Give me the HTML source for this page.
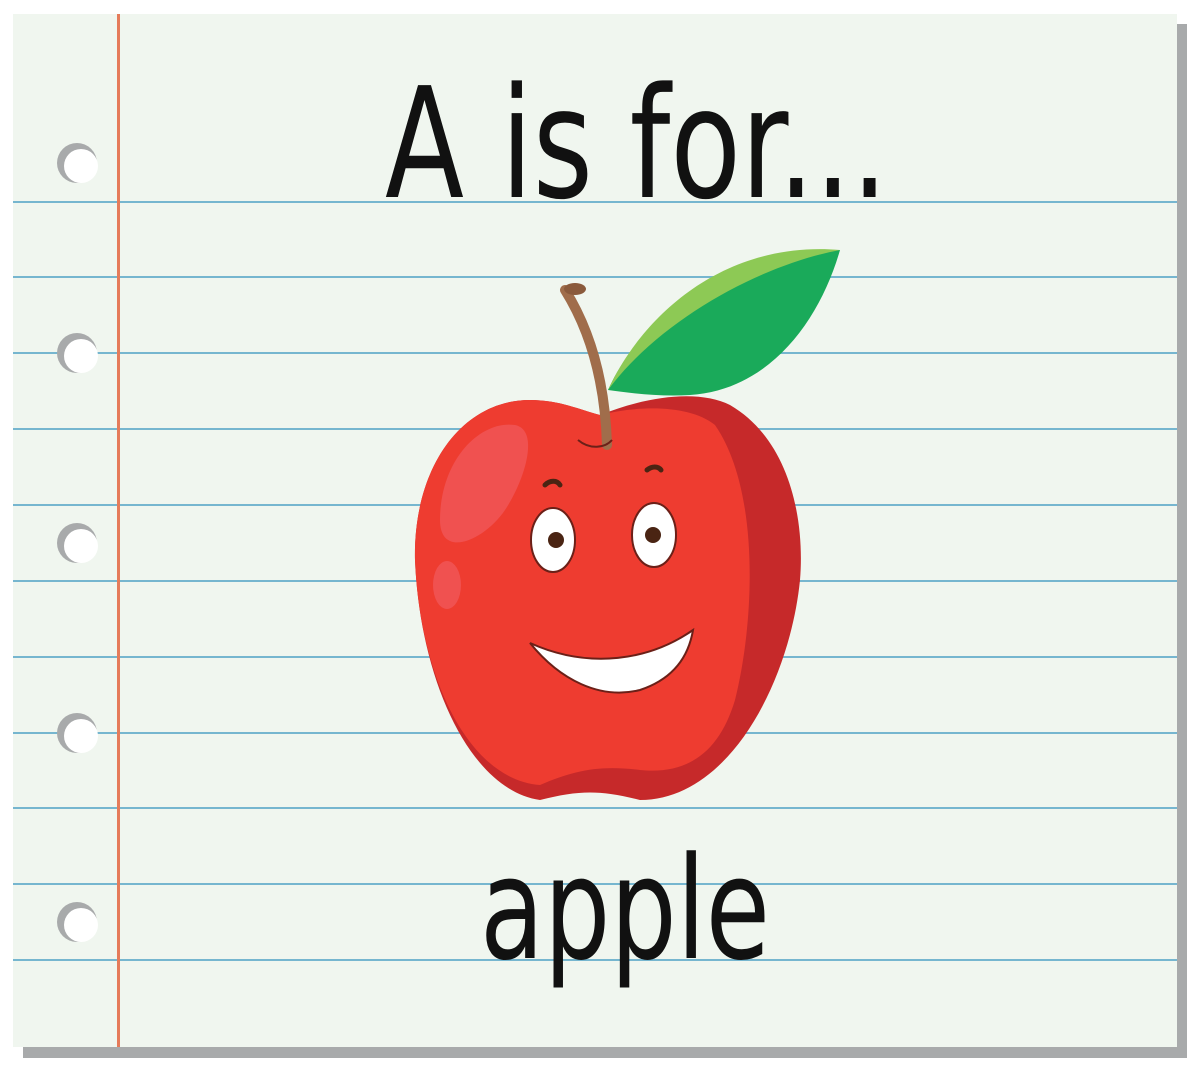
<!DOCTYPE html>
<html><head><style>
html,body{margin:0;padding:0;background:#fff;}
svg{display:block}
</style></head><body>
<svg width="1200" height="1072" viewBox="0 0 1200 1072" xmlns="http://www.w3.org/2000/svg">
<rect x="0" y="0" width="1200" height="1072" fill="#fff"/>
<rect x="23" y="24" width="1164" height="1034" fill="#a8aaab"/>
<rect x="13" y="14" width="1164" height="1033" fill="#f0f6ef"/>
<g stroke="#76b6cf" stroke-width="2">
<line x1="13" y1="202" x2="1177" y2="202"/>
<line x1="13" y1="277" x2="1177" y2="277"/>
<line x1="13" y1="353" x2="1177" y2="353"/>
<line x1="13" y1="429" x2="1177" y2="429"/>
<line x1="13" y1="505" x2="1177" y2="505"/>
<line x1="13" y1="581" x2="1177" y2="581"/>
<line x1="13" y1="657" x2="1177" y2="657"/>
<line x1="13" y1="733" x2="1177" y2="733"/>
<line x1="13" y1="808" x2="1177" y2="808"/>
<line x1="13" y1="884" x2="1177" y2="884"/>
<line x1="13" y1="960" x2="1177" y2="960"/>
</g>
<rect x="117" y="14" width="3" height="1033" fill="#e57b5a"/>
<g>
<circle cx="77" cy="163" r="20" fill="#a8aaab"/><circle cx="81" cy="166" r="17" fill="#fff"/>
<circle cx="77" cy="353" r="20" fill="#a8aaab"/><circle cx="81" cy="356" r="17" fill="#fff"/>
<circle cx="77" cy="543" r="20" fill="#a8aaab"/><circle cx="81" cy="546" r="17" fill="#fff"/>
<circle cx="77" cy="733" r="20" fill="#a8aaab"/><circle cx="81" cy="736" r="17" fill="#fff"/>
<circle cx="77" cy="922" r="20" fill="#a8aaab"/><circle cx="81" cy="925" r="17" fill="#fff"/>
</g>
<g transform="translate(385,197) scale(1,1.37)">
<text x="0" y="0" font-family="DejaVu Sans, sans-serif" font-size="112" fill="#111" textLength="503" lengthAdjust="spacingAndGlyphs">A is for...</text>
</g>
<g transform="translate(480,958) scale(1,1.35)">
<text x="0" y="0" font-family="DejaVu Sans, sans-serif" font-size="105" fill="#111" textLength="290" lengthAdjust="spacingAndGlyphs">apple</text>
</g>
<!-- leaf -->
<path d="M608 390 C640 320 720 250 840 250 C820 320 770 390 690 395 C660 397 630 393 608 390Z" fill="#1aaa5a"/>
<path d="M608 390 C640 320 720 240 840 250 C760 265 660 320 608 390Z" fill="#8dc955"/>
<!-- apple body -->
<path d="M600 415 C650 395 700 390 730 405 C790 440 805 520 800 580 C790 680 730 800 640 800 C600 790 580 790 540 800 C470 790 420 680 415 560 C413 470 460 400 530 400 C560 400 580 410 600 415Z" fill="#c6292a"/>
<path d="M600 415 C640 405 690 405 715 425 C760 490 755 620 735 700 C720 750 690 775 640 770 C600 765 575 770 540 785 C470 780 420 680 415 560 C413 470 460 400 530 400 C560 400 580 410 600 415Z" fill="#ee3c30"/>
<path d="M440 520 C440 460 480 420 515 425 C540 430 525 480 505 510 C485 540 440 560 440 520Z" fill="#f05150"/>
<ellipse cx="447" cy="585" rx="14" ry="24" fill="#f05150"/>
<!-- stem -->
<path d="M565 290 C590 330 605 380 607 445" stroke="#a06d4b" stroke-width="10" fill="none" stroke-linecap="round"/>
<ellipse cx="575" cy="289" rx="11" ry="6" fill="#8a5a3c"/>
<path d="M578 440 C590 450 605 448 612 440" stroke="#6b2018" stroke-width="2" fill="none"/>
<!-- eyes -->
<ellipse cx="553" cy="540" rx="22" ry="32" fill="#fff" stroke="#6b2018" stroke-width="2"/>
<ellipse cx="654" cy="535" rx="22" ry="32" fill="#fff" stroke="#6b2018" stroke-width="2"/>
<circle cx="556" cy="540" r="8" fill="#4a2413"/>
<circle cx="653" cy="535" r="8" fill="#4a2413"/>
<path d="M545 485 C550 480 557 480 560 485" stroke="#4a2413" stroke-width="5" fill="none" stroke-linecap="round"/>
<path d="M647 470 C652 466 658 466 661 470" stroke="#4a2413" stroke-width="5" fill="none" stroke-linecap="round"/>
<!-- mouth -->
<path d="M530 643 C560 680 600 700 640 690 C670 680 688 660 693 630 C650 660 590 670 530 643Z" fill="#fff" stroke="#6b2018" stroke-width="2"/>
</svg>
</body></html>
